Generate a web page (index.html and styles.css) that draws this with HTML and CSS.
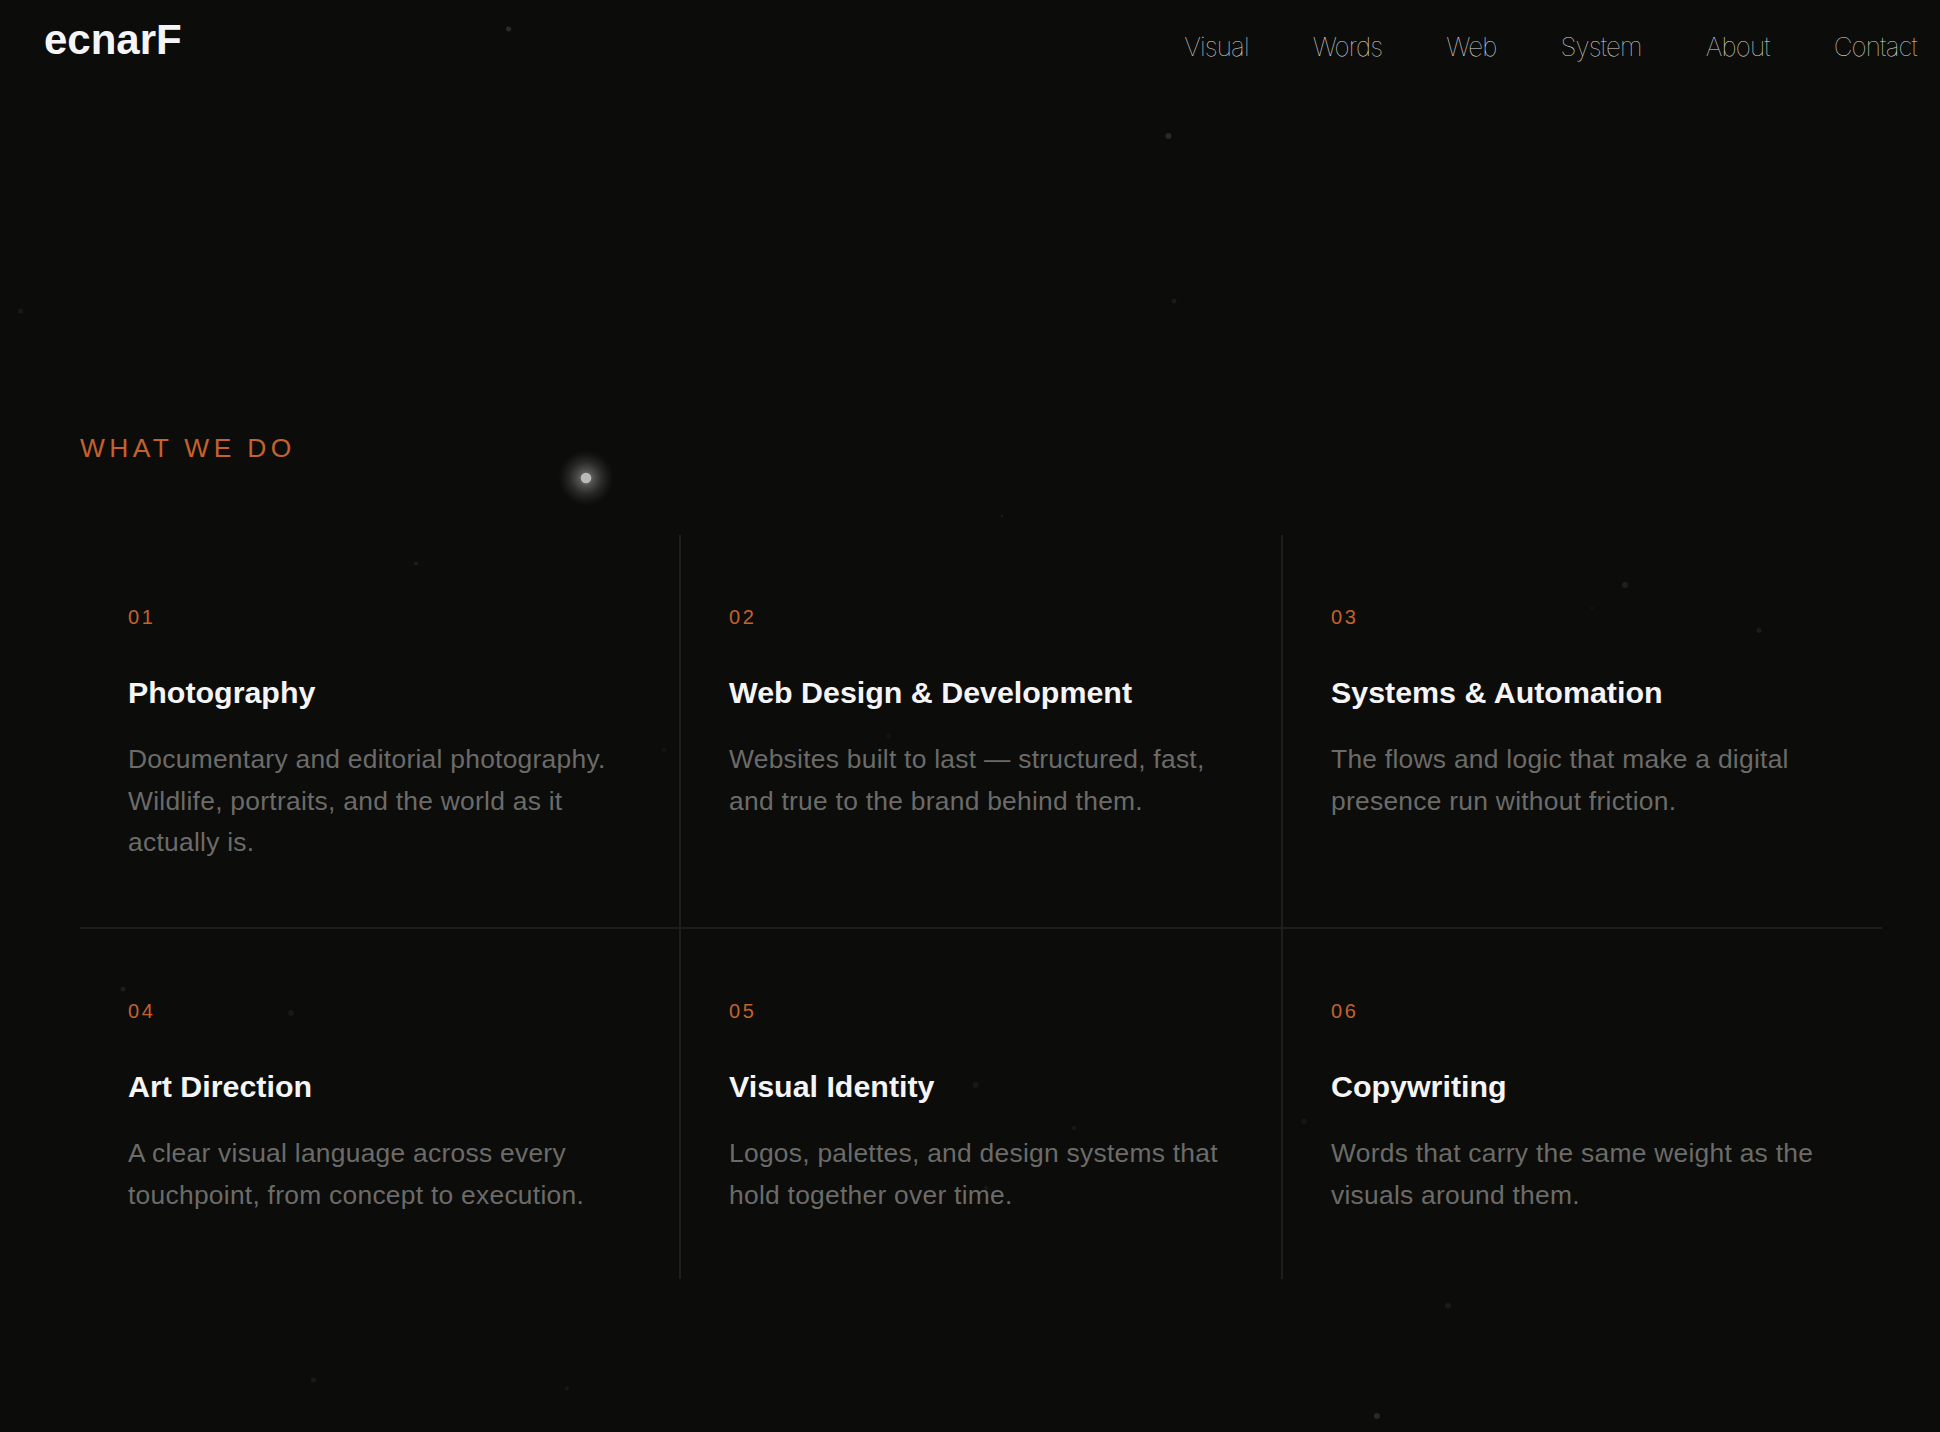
FILE: index.html
```
<!DOCTYPE html>
<html lang="en">
<head>
    <meta charset="UTF-8">
    <meta name="viewport" content="width=device-width, initial-scale=1.0">
    <title>ecnarF</title>
    <link rel="stylesheet" href="styles.css">
</head>
<body>
    <!-- Floating dust and cursor glow -->
    <svg class="particles" width="1940" height="1432" viewBox="0 0 1940 1432">
        <defs>
            <radialGradient id="glow">
                <stop offset="0" stop-color="#fff" stop-opacity="0.48"/>
                <stop offset="0.3" stop-color="#fff" stop-opacity="0.26"/>
                <stop offset="0.6" stop-color="#fff" stop-opacity="0.11"/>
                <stop offset="0.85" stop-color="#fff" stop-opacity="0.03"/>
                <stop offset="1" stop-color="#fff" stop-opacity="0"/>
            </radialGradient>
        </defs>
        <g fill="#fff">
            <circle cx="508.500" cy="29" r="2.500" opacity="0.13"/>
            <circle cx="1168.500" cy="136" r="3" opacity="0.12"/>
            <circle cx="1174" cy="301" r="2.500" opacity="0.06"/>
            <circle cx="20.500" cy="311" r="2.500" opacity="0.06"/>
            <circle cx="1002" cy="516" r="1.500" opacity="0.06"/>
            <circle cx="416" cy="563.500" r="2" opacity="0.08"/>
            <circle cx="1625" cy="585" r="3" opacity="0.08"/>
            <circle cx="1592" cy="608" r="1.500" opacity="0.04"/>
            <circle cx="1759" cy="630.500" r="2.500" opacity="0.07"/>
            <circle cx="664" cy="750" r="2.500" opacity="0.03"/>
            <circle cx="889" cy="736" r="2.500" opacity="0.03"/>
            <circle cx="123" cy="989" r="2.500" opacity="0.07"/>
            <circle cx="291" cy="1013" r="3" opacity="0.05"/>
            <circle cx="975.500" cy="1085" r="3" opacity="0.05"/>
            <circle cx="1074" cy="1128" r="2" opacity="0.06"/>
            <circle cx="986" cy="1188" r="2" opacity="0.05"/>
            <circle cx="1304" cy="1121" r="3" opacity="0.04"/>
            <circle cx="1448" cy="1305.500" r="3" opacity="0.06"/>
            <circle cx="1377" cy="1416" r="3" opacity="0.12"/>
            <circle cx="313.500" cy="1380" r="2.500" opacity="0.06"/>
            <circle cx="567" cy="1388.500" r="2" opacity="0.05"/>
        </g>
        <circle cx="586" cy="478" r="28" fill="url(#glow)"/>
        <circle cx="586" cy="478" r="5.300" fill="#bababa"/>
    </svg>

    <header class="header">
        <a class="logo" href="#">ecnarF</a>
        <nav class="nav">
            <a href="#">Visual</a>
            <a href="#">Words</a>
            <a href="#">Web</a>
            <a href="#">System</a>
            <a href="#">About</a>
            <a href="#">Contact</a>
        </nav>
    </header>

    <main class="services">
        <h2 class="services-label">What we do</h2>
        <div class="services-grid">
            <article class="service">
                <span class="service-number">01</span>
                <h3>Photography</h3>
                <p>Documentary and editorial photography. Wildlife, portraits, and the world as it actually is.</p>
            </article>
            <article class="service">
                <span class="service-number">02</span>
                <h3>Web Design &amp; Development</h3>
                <p>Websites built to last — structured, fast, and true to the brand behind them.</p>
            </article>
            <article class="service">
                <span class="service-number">03</span>
                <h3>Systems &amp; Automation</h3>
                <p>The flows and logic that make a digital presence run without friction.</p>
            </article>
            <article class="service">
                <span class="service-number">04</span>
                <h3>Art Direction</h3>
                <p>A clear visual language across every touchpoint, from concept to execution.</p>
            </article>
            <article class="service">
                <span class="service-number">05</span>
                <h3>Visual Identity</h3>
                <p>Logos, palettes, and design systems that hold together over time.</p>
            </article>
            <article class="service">
                <span class="service-number">06</span>
                <h3>Copywriting</h3>
                <p>Words that carry the same weight as the visuals around them.</p>
            </article>
        </div>
    </main>
</body>
</html>
```
FILE: styles.css
```
* {
    box-sizing: border-box;
    margin: 0;
    padding: 0;
}
body {
    height: 1432px;
    background-color: #0c0c0a;
    color: #f5f5f7;
    font-family: "Liberation Sans", Arial, sans-serif;
    overflow: hidden;
}
a {
    color: inherit;
    text-decoration: none;
}
.particles {
    position: absolute;
    top: 0;
    left: 0;
    pointer-events: none;
}
.header {
    display: flex;
    justify-content: space-between;
    align-items: flex-start;
    height: 96px;
    padding: 16px 23px 0 44px;
}
.logo {
    font-size: 42px;
    font-weight: bold;
    line-height: 48px;
    letter-spacing: 0;
}
.nav {
    display: flex;
    gap: 64px;
    padding-top: 15px;
    font-family: Inter, "Liberation Sans", sans-serif;
    font-size: 26px;
    font-weight: 100;
    line-height: 32px;
    letter-spacing: -0.033em;
    color: #dadad8;
}
.services {
    width: 1962px;
    padding: 336px 80px 0;
}
.services-label {
    margin-bottom: 71px;
    font-size: 26.4px;
    font-weight: normal;
    line-height: 32px;
    letter-spacing: 0.165em;
    text-transform: uppercase;
    color: #c4622d;
}
.services-grid {
    display: grid;
    grid-template-columns: 601px 602px 1fr;
    grid-template-rows: 394px 350px;
}
.service {
    padding: 70px 48px 0;
    border-right: 2px solid #1e1e1d;
    border-bottom: 2px solid #1e1e1d;
}
.service:nth-child(3n) {
    border-right: none;
}
.service:nth-child(n+4) {
    border-bottom: none;
}
.service-number {
    display: block;
    margin-bottom: 45px;
    font-size: 20px;
    line-height: 24px;
    letter-spacing: 0.13em;
    color: #c4622d;
}
.service h3 {
    margin-bottom: 29px;
    font-size: 30.4px;
    line-height: 36px;
    letter-spacing: 0;
}
.service p {
    font-size: 26.4px;
    line-height: 41.6px;
    letter-spacing: 0.01em;
    color: #6b6b69;
}
```
